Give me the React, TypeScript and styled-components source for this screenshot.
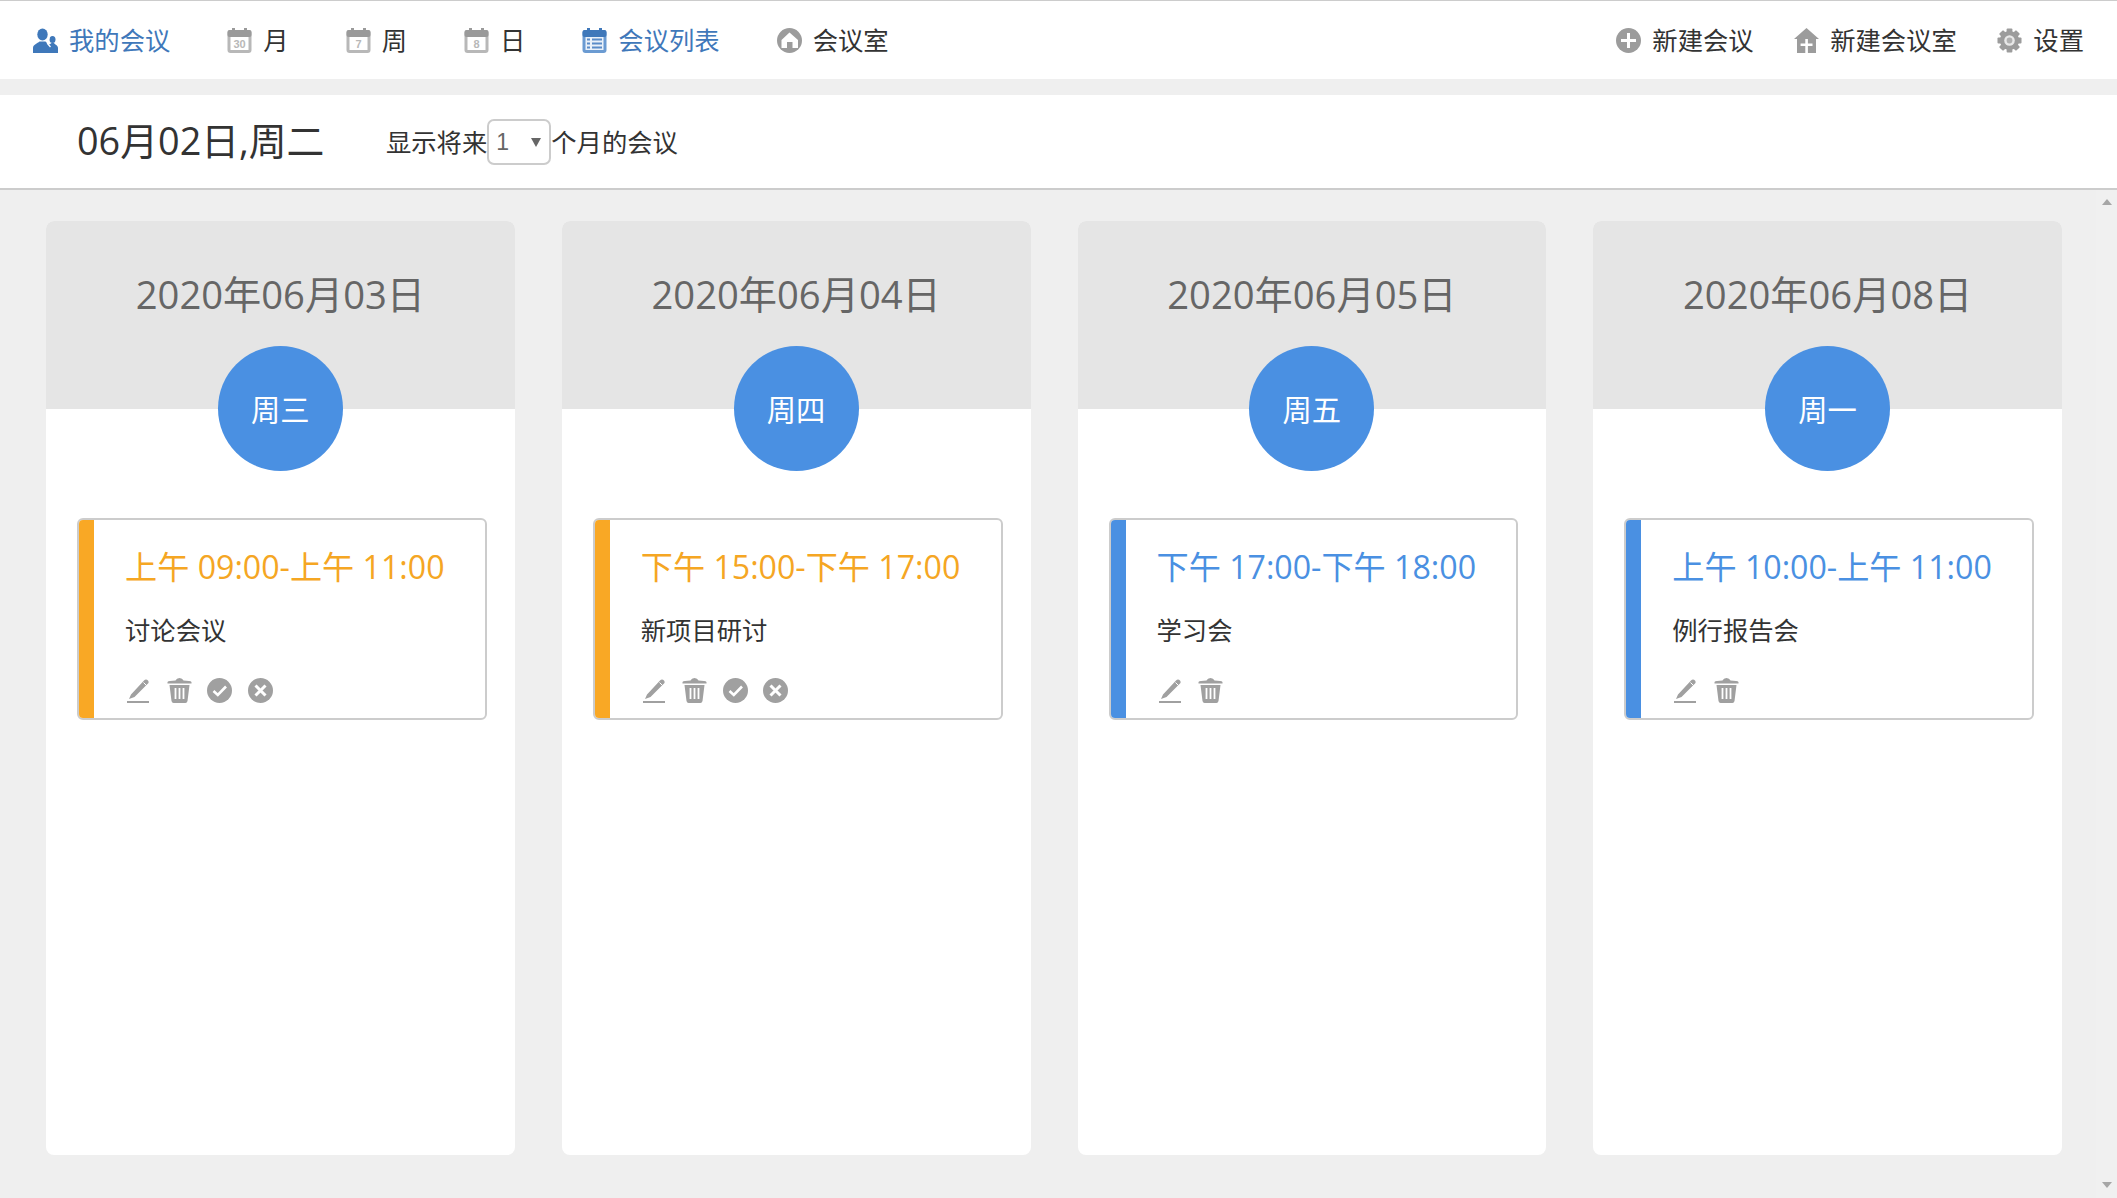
import React from "react";
import styled, { createGlobalStyle } from "styled-components";

const Global = createGlobalStyle`
  html, body { margin: 0; padding: 0; height: 100%; overflow: hidden; }
  #root { height: 100%; }
  * { box-sizing: border-box; }
  body { font-family: "Open Sans", "Noto Sans CJK SC", sans-serif; color: #333; background: #efefef; }
`;

const Page = styled.div`
  height: 1198px;
  display: flex;
  flex-direction: column;
  border-top: 1px solid #ccc;
`;

const NavBar = styled.nav`
  height: 78px;
  flex: none;
  background: #fff;
  display: flex;
  align-items: center;
  justify-content: space-between;
  padding: 0 33px;
  margin-bottom: 16px;
`;

const NavGroup = styled.div<{ $gap: number }>`
  display: flex;
  align-items: center;
  gap: ${(p) => p.$gap}px;
`;

const NavItem = styled.a<{ $active?: boolean }>`
  display: flex;
  align-items: center;
  gap: 11px;
  font-size: 25.33px;
  line-height: 34px;
  color: ${(p) => (p.$active ? "#3f78ba" : "#333")};
  white-space: nowrap;
`;

const IconBox = styled.svg`
  width: 25px;
  height: 25px;
  flex: none;
  display: block;
`;

const SubHeader = styled.header`
  height: 95px;
  flex: none;
  background: #fff;
  border-bottom: 2px solid #ccc;
  display: flex;
  align-items: center;
  padding-left: 77px;
`;

const Today = styled.h1`
  margin: 0 61.5px 2px 0;
  font-size: 37.8px;
  font-weight: 400;
  line-height: 50px;
  color: #333;
  white-space: nowrap;
`;

const RangeText = styled.span`
  font-size: 25.33px;
  line-height: 34px;
  color: #333;
`;

const SelectWrap = styled.span`
  position: relative;
  display: block;
  width: 64px;
  height: 46px;
  &::after {
    content: "";
    position: absolute;
    right: 10px;
    top: 19px;
    border-left: 5px solid transparent;
    border-right: 5px solid transparent;
    border-top: 9px solid #666;
  }
`;

const RangeSelect = styled.select`
  appearance: none;
  width: 100%;
  height: 100%;
  border: 2px solid #ccc;
  border-radius: 7px;
  background: #fff;
  color: #666;
  padding: 0 0 0 7px;
  font-family: "Liberation Sans", sans-serif;
  font-size: 23px;
  outline: none;
`;

const Content = styled.main`
  flex: 1;
  min-height: 0;
  display: flex;
`;

const Columns = styled.div`
  flex: 1;
  display: grid;
  grid-template-columns: repeat(4, 1fr);
  gap: 47px;
  padding: 31px 34px 43px 46px;
`;

const Scrollbar = styled.div`
  width: 21px;
  flex: none;
  background: #f0f0f0;
  display: flex;
  flex-direction: column;
  align-items: center;
  justify-content: space-between;
  padding: 9px 0 10px;
`;

const ArrowUp = styled.span`
  border-left: 5px solid transparent;
  border-right: 5px solid transparent;
  border-bottom: 6px solid #a6a6a6;
`;

const ArrowDown = styled.span`
  border-left: 5px solid transparent;
  border-right: 5px solid transparent;
  border-top: 6px solid #a6a6a6;
`;

const DayColumn = styled.section`
  background: #fff;
  border-radius: 8px;
  overflow: hidden;
  display: flex;
  flex-direction: column;
`;

const DayHeader = styled.div`
  height: 188px;
  flex: none;
  background: #e5e5e5;
  padding-top: 49px;
  display: flex;
  flex-direction: column;
  align-items: center;
`;

const DayDate = styled.div`
  font-size: 38.2px;
  line-height: 48px;
  color: #666;
  white-space: nowrap;
`;

const WeekBadge = styled.div`
  position: relative;
  width: 125px;
  height: 125px;
  flex: none;
  margin-top: 28px;
  border-radius: 50%;
  background: #4a90e2;
  color: #fff;
  font-size: 29.33px;
  display: flex;
  align-items: center;
  justify-content: center;
`;

const DayBody = styled.div`
  flex: 1;
  padding: 109px 28px 0 31px;
`;

const EventCard = styled.article`
  height: 202px;
  border: 2px solid #ccc;
  border-radius: 6px;
  overflow: hidden;
  display: flex;
  background: #fff;
`;

const Stripe = styled.div<{ $color: string }>`
  width: 15px;
  flex: none;
  background: ${(p) => p.$color};
`;

const EventBody = styled.div`
  flex: 1;
  padding: 25px 0 0 31px;
`;

const EventTime = styled.div<{ $color: string }>`
  font-size: 32.15px;
  line-height: 44px;
  color: ${(p) => p.$color};
  white-space: nowrap;
`;

const EventTitle = styled.div`
  margin-top: 24px;
  font-size: 25.33px;
  line-height: 34px;
  color: #333;
`;

const ActionRow = styled.div`
  margin: 31px 0 0 1px;
  display: flex;
  gap: 15.5px;
`;

const ActionIcon = styled.svg`
  width: 25px;
  height: 25px;
  display: block;
  flex: none;
`;

const GRAY = "#a0a0a0";

const UserIcon = () => (
  <IconBox viewBox="0 0 25 25">
    <g fill="#3f78ba">
      <ellipse cx="9.5" cy="6.5" rx="5.2" ry="6" />
      <path d="M0 25 V20 C0 16.5 4.5 15.5 6.5 13.5 H12.5 C13.5 15 15.5 16 17 17 V25 Z" />
      <ellipse cx="19.5" cy="11.5" rx="3" ry="3.5" />
      <path d="M14 25 V20 C14 17 17 16.5 18.5 15 H21 C21.5 16.5 25 17 25 20 V25 Z" />
    </g>
    <path d="M16 9.5 L14.5 15.5 L17.5 19" stroke="#fff" strokeWidth="1.3" fill="none" />
  </IconBox>
);

const CalendarIcon = ({ label }: { label: string }) => (
  <IconBox viewBox="0 0 25 25">
    <rect x="0.5" y="2" width="24" height="23" rx="3" fill="#b8b8b8" />
    <rect x="0.5" y="2" width="24" height="7" rx="2" fill="#9a9a9a" />
    <rect x="5" y="0" width="3" height="4" fill="#9a9a9a" />
    <rect x="17" y="0" width="3" height="4" fill="#9a9a9a" />
    <rect x="3.5" y="9" width="18" height="13" fill="#fff" />
    <text x="12.5" y="20" textAnchor="middle" fontSize="11" fontWeight="700" fontFamily="Liberation Sans, sans-serif" fill="#b8b8b8">
      {label}
    </text>
  </IconBox>
);

const ListCalendarIcon = () => (
  <IconBox viewBox="0 0 25 25">
    <rect x="0.5" y="2" width="24" height="23" rx="3" fill="#6b9bd2" />
    <rect x="0.5" y="2" width="24" height="7" rx="2" fill="#3f78ba" />
    <rect x="5" y="0" width="3" height="4" fill="#3f78ba" />
    <rect x="17" y="0" width="3" height="4" fill="#3f78ba" />
    <rect x="3.5" y="9" width="18" height="13" fill="#eaf1f9" />
    <path d="M5 10.5h3v2H5zM10 10.5h10v2H10zM5 14.5h3v2H5zM10 14.5h10v2H10zM5 18.5h3v2H5zM10 18.5h10v2H10z" fill="#5a8cc8" />
  </IconBox>
);

const RoomIcon = () => (
  <IconBox viewBox="0 0 25 25">
    <circle cx="12.5" cy="12.5" r="12.5" fill="#9c9c9c" />
    <path d="M12.5 4.5 L21 12 V20 H15.5 V14 H10 V20 H4.5 V12 Z" fill="#fff" />
  </IconBox>
);

const PlusCircleIcon = () => (
  <IconBox viewBox="0 0 25 25">
    <circle cx="12.5" cy="12.5" r="12.5" fill="#9c9c9c" />
    <path d="M11 5h3v6h6v3h-6v6h-3v-6H5v-3h6z" fill="#fff" />
  </IconBox>
);

const HousePlusIcon = () => (
  <IconBox viewBox="0 0 25 25">
    <path d="M12.5 0 L25 11 H22 V25 H3 V11 H0 Z" fill="#9c9c9c" />
    <path d="M11.3 11h2.6v4.5h4.6v2.6h-4.6V25h-2.6v-6.9H6.6v-2.6h4.7z" fill="#fff" />
  </IconBox>
);

const GearIcon = () => (
  <IconBox viewBox="0 0 26 26">
    <g fill="#9c9c9c">
      <circle cx="13" cy="13" r="10" />
      {[0, 45, 90, 135, 180, 225, 270, 315].map((a) => (
        <rect key={a} x="10" y="0.5" width="6" height="6" rx="1" transform={`rotate(${a} 13 13)`} />
      ))}
    </g>
    <circle cx="13" cy="13" r="5.5" fill="#e8e8e8" />
    <circle cx="13" cy="13" r="3" fill="#b0b0b0" />
  </IconBox>
);

const PencilIcon = () => (
  <ActionIcon viewBox="0 0 25 25">
    <path d="M5 16.5 L18 2.5 Q20 0.5 22 2.5 Q23.5 4.5 21.5 6 L8.5 19 L3 21 Z" fill={GRAY} />
    <path d="M17.5 4.5 L20.5 7.5" stroke="#fff" strokeWidth="1" />
    <rect x="1" y="23" width="22" height="2" fill={GRAY} />
  </ActionIcon>
);

const TrashIcon = () => (
  <ActionIcon viewBox="0 0 25 25">
    <path d="M0.5 4 Q1.5 2.5 8.5 2.5 Q9.5 0 12.5 0 Q15.5 0 16.5 2.5 Q23.5 2.5 24.5 4 V5.5 H0.5 Z" fill={GRAY} />
    <path d="M2.5 7 H22.5 L20.5 23 Q20 25 18.5 25 H6.5 Q5 25 4.5 23 Z" fill={GRAY} />
    <path d="M8.5 10 V21 M12.5 10 V21 M16.5 10 V21" stroke="#fff" strokeWidth="1.8" />
  </ActionIcon>
);

const CheckIcon = () => (
  <ActionIcon viewBox="0 0 25 25">
    <circle cx="12.5" cy="12.5" r="12.5" fill={GRAY} />
    <path d="M6.5 13 L10.8 17 L19 8.5" stroke="#fff" strokeWidth="2.6" fill="none" />
  </ActionIcon>
);

const CrossIcon = () => (
  <ActionIcon viewBox="0 0 25 25">
    <circle cx="12.5" cy="12.5" r="12.5" fill={GRAY} />
    <path d="M7.5 7.5 L17.5 17.5 M17.5 7.5 L7.5 17.5" stroke="#fff" strokeWidth="3" />
  </ActionIcon>
);

const ORANGE = "#f5a623";
const STRIPE_ORANGE = "#f9a825";
const BLUE = "#4a90e2";

const days = [
  { date: "2020年06月03日", week: "周三", time: "上午 09:00-上午 11:00", title: "讨论会议", pending: true },
  { date: "2020年06月04日", week: "周四", time: "下午 15:00-下午 17:00", title: "新项目研讨", pending: true },
  { date: "2020年06月05日", week: "周五", time: "下午 17:00-下午 18:00", title: "学习会", pending: false },
  { date: "2020年06月08日", week: "周一", time: "上午 10:00-上午 11:00", title: "例行报告会", pending: false },
];

export default function App() {
  return (
    <>
      <Global />
      <Page>
        <NavBar>
          <NavGroup $gap={57}>
            <NavItem $active><UserIcon />我的会议</NavItem>
            <NavItem><CalendarIcon label="30" />月</NavItem>
            <NavItem><CalendarIcon label="7" />周</NavItem>
            <NavItem><CalendarIcon label="8" />日</NavItem>
            <NavItem $active><ListCalendarIcon />会议列表</NavItem>
            <NavItem><RoomIcon />会议室</NavItem>
          </NavGroup>
          <NavGroup $gap={40.5}>
            <NavItem><PlusCircleIcon />新建会议</NavItem>
            <NavItem><HousePlusIcon />新建会议室</NavItem>
            <NavItem><GearIcon />设置</NavItem>
          </NavGroup>
        </NavBar>
        <SubHeader>
          <Today>06月02日,周二</Today>
          <RangeText>显示将来</RangeText>
          <SelectWrap>
            <RangeSelect defaultValue="1">
              <option value="1">1</option>
              <option value="2">2</option>
              <option value="3">3</option>
            </RangeSelect>
          </SelectWrap>
          <RangeText>个月的会议</RangeText>
        </SubHeader>
        <Content>
          <Columns>
            {days.map((d) => (
              <DayColumn key={d.date}>
                <DayHeader>
                  <DayDate>{d.date}</DayDate>
                  <WeekBadge>{d.week}</WeekBadge>
                </DayHeader>
                <DayBody>
                  <EventCard>
                    <Stripe $color={d.pending ? STRIPE_ORANGE : BLUE} />
                    <EventBody>
                      <EventTime $color={d.pending ? ORANGE : BLUE}>{d.time}</EventTime>
                      <EventTitle>{d.title}</EventTitle>
                      <ActionRow>
                        <PencilIcon />
                        <TrashIcon />
                        {d.pending && <CheckIcon />}
                        {d.pending && <CrossIcon />}
                      </ActionRow>
                    </EventBody>
                  </EventCard>
                </DayBody>
              </DayColumn>
            ))}
          </Columns>
          <Scrollbar>
            <ArrowUp />
            <ArrowDown />
          </Scrollbar>
        </Content>
      </Page>
    </>
  );
}
